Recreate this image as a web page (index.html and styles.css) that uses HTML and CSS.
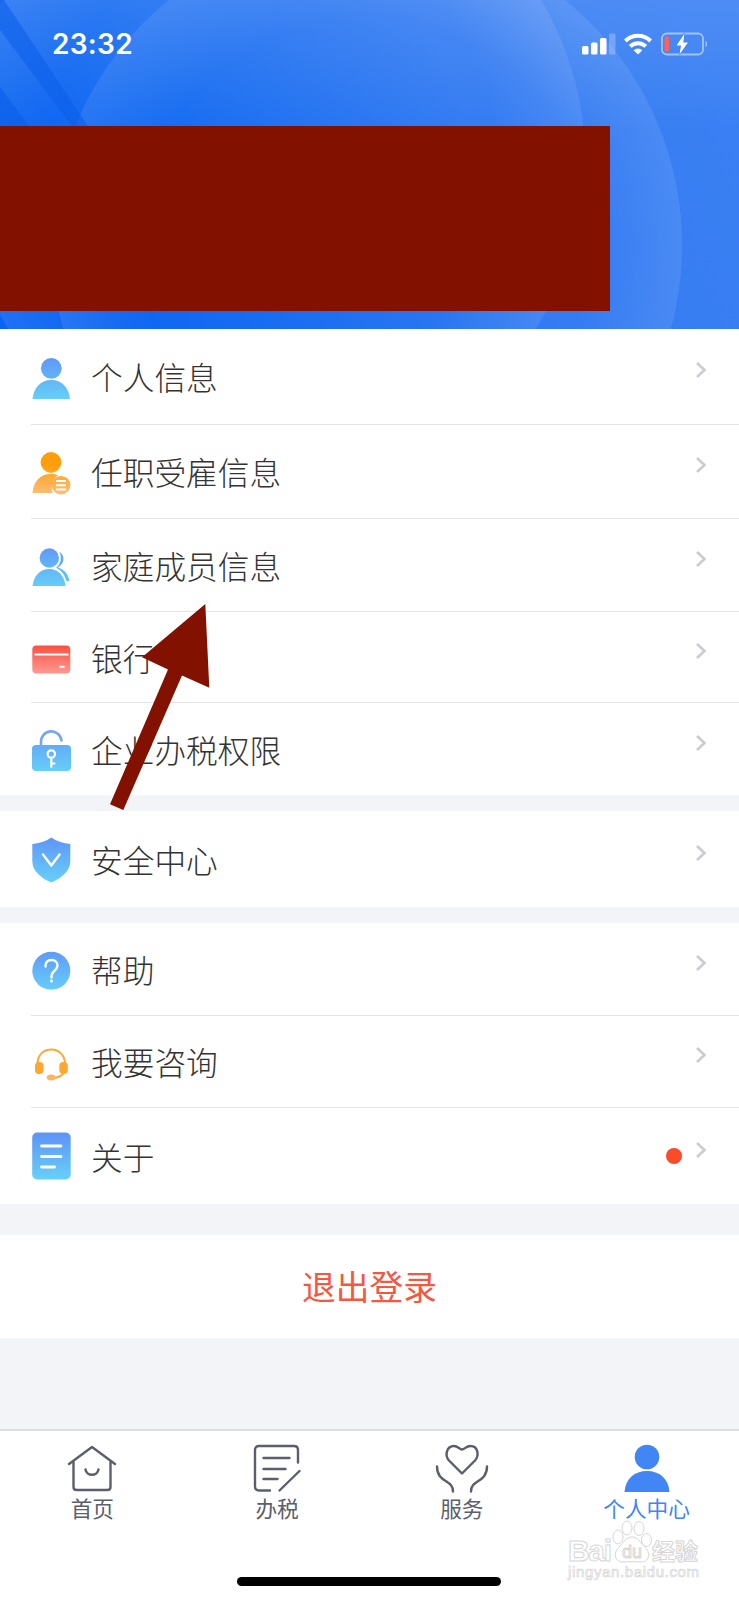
FILE: index.html
```html
<!DOCTYPE html>
<html lang="zh-CN">
<head>
    <meta charset="UTF-8">
    <meta name="viewport" content="width=device-width, initial-scale=1.0">
    <title>个人中心</title>
    <link rel="stylesheet" href="styles.css">
</head>
<body>
    <svg class="defs" width="0" height="0">
        <defs>
            <linearGradient id="blue" x1="0" y1="0" x2="0" y2="50" gradientUnits="userSpaceOnUse">
                <stop offset="0.1" stop-color="#5f97f6"/>
                <stop offset="0.95" stop-color="#66cff8"/>
            </linearGradient>
            <linearGradient id="orange" x1="0" y1="5" x2="0" y2="47" gradientUnits="userSpaceOnUse">
                <stop offset="0.3" stop-color="#ff9d0a"/>
                <stop offset="1" stop-color="#fcbd78"/>
            </linearGradient>
            <linearGradient id="red" x1="0" y1="0" x2="0" y2="1">
                <stop offset="0" stop-color="#fb5040"/>
                <stop offset="1" stop-color="#fd9a92"/>
            </linearGradient>
            <symbol id="chevron" viewBox="0 0 12 18">
                <path d="M2 2l7.5 7L2 16" fill="none" stroke="#cbccd2" stroke-width="2.6"/>
            </symbol>
        </defs>
    </svg>

    <header class="header">
        <svg class="header-bg" viewBox="0 0 739 329" width="739" height="329">
            <defs>
                <linearGradient id="sky" x1="0" y1="0.55" x2="1" y2="0.35">
                    <stop offset="0" stop-color="#0a63f2"/>
                    <stop offset="0.25" stop-color="#176cf1"/>
                    <stop offset="0.65" stop-color="#357cf2"/>
                    <stop offset="1" stop-color="#3a80f3"/>
                </linearGradient>
                <radialGradient id="ring">
                    <stop offset="0.72" stop-color="#fff" stop-opacity="0"/>
                    <stop offset="1" stop-color="#fff" stop-opacity="0.09"/>
                </radialGradient>
                <linearGradient id="top" x1="0" y1="0" x2="0" y2="1">
                    <stop offset="0" stop-color="#fff" stop-opacity="0.1"/>
                    <stop offset="0.4" stop-color="#fff" stop-opacity="0"/>
                </linearGradient>
            </defs>
            <rect width="739" height="329" fill="url(#sky)"/>
            <rect width="739" height="329" fill="url(#top)"/>
            <circle cx="367" cy="245" r="315" fill="url(#ring)"/>
            <circle cx="272" cy="160" r="313" fill="url(#ring)"/>
            <path d="M0 0h4l84 126H72L0 30z" fill="#0b5fe9" opacity="0.6"/>
            <path d="M0 87l31 42H0z" fill="#0b5fe9" opacity="0.7"/>
        </svg>
        <div class="status-bar">
            <span class="time">23:32</span>
            <svg class="status-icons" viewBox="0 0 128 24" width="128" height="24">
                <g fill="#fff">
                    <rect x="0" y="14" width="6.500" height="8.500" rx="1.500"/>
                    <rect x="9" y="10.500" width="6.500" height="12" rx="1.500"/>
                    <rect x="18" y="6" width="6.500" height="16.500" rx="1.500"/>
                    <rect x="27" y="1.500" width="6.500" height="21" rx="1.500" opacity="0.25"/>
                    <path d="M56 22.500l-4.300-4.300a6 6 0 0 1 8.600 0z"/>
                </g>
                <path d="M48.200 14.400a11 11 0 0 1 15.600 0M43.400 9a18 18 0 0 1 25.200 0" fill="none" stroke="#fff" stroke-width="4"/>
                <rect x="80" y="1.500" width="41" height="21" rx="5" fill="none" stroke="#fff" stroke-opacity="0.5" stroke-width="1.800"/>
                <path d="M123.500 8.500q3.500 3.500 0 7z" fill="#fff" opacity="0.5"/>
                <rect x="82.500" y="4.500" width="4.500" height="15" rx="1.500" fill="#ff6058"/>
                <path d="M102.500 1.500L94.500 13.500h4.500L97.500 22.500l8.500-12h-4.700z" fill="#fff" stroke="#3d80f2" stroke-width="1.500" paint-order="stroke"/>
            </svg>
        </div>
        <div class="user-mask"></div>
    </header>

    <main>
        <ul class="menu menu-info">
            <li>
                <svg class="icon" viewBox="0 0 40 50">
                    <g fill="url(#blue)">
                        <circle cx="20.300" cy="16.300" r="10.400"/>
                        <path d="M1.500 47C2.500 35.500 10 28 20.300 28S38 35.500 39 47z"/>
                    </g>
                </svg>
                <span>个人信息</span>
                <svg class="arrow"><use href="#chevron"/></svg>
            </li>
            <li>
                <svg class="icon" viewBox="0 0 40 50">
                    <g fill="url(#orange)">
                        <circle cx="20" cy="15.500" r="10.400"/>
                        <path d="M1.500 46C2.500 34.500 9 27 20 27c3 0 5 .4 7 1.400-5.500 3-8 10.600-5.200 17.600z"/>
                        <circle cx="30" cy="38.200" r="9.300"/>
                    </g>
                    <path d="M25 34h10M25 38.200h10M25 42.400h10" stroke="#fff" stroke-width="2"/>
                </svg>
                <span>任职受雇信息</span>
                <svg class="arrow"><use href="#chevron"/></svg>
            </li>
            <li>
                <svg class="icon" viewBox="0 0 40 50">
                    <g fill="url(#blue)">
                        <circle cx="18.300" cy="18" r="9.700"/>
                        <path d="M1.600 46C2.500 36 9 29 18.300 29S33.500 36 34.500 46z"/>
                        <path d="M28.500 12c5.500 3 5.500 11.500-1.500 15.500 6.500 2 10.500 7 11.500 13.500h-3.300c-1.200-6-5-11-10.200-13.200 5-4 6-10 3.500-15.800z"/>
                    </g>
                </svg>
                <span>家庭成员信息</span>
                <svg class="arrow"><use href="#chevron"/></svg>
            </li>
            <li>
                <svg class="icon" viewBox="0 0 40 50">
                    <rect x="1.300" y="13.500" width="38" height="28" rx="4" fill="url(#red)"/>
                    <path d="M3.500 22.500h34M28.500 34.800h5" stroke="#fff" stroke-width="2"/>
                </svg>
                <span>银行卡</span>
                <svg class="arrow"><use href="#chevron"/></svg>
            </li>
            <li>
                <svg class="icon" viewBox="0 0 40 50">
                    <path d="M10 22v-3.500a10.300 10.300 0 0 1 20.500-2" fill="none" stroke="#76a5f5" stroke-width="2.600" stroke-linecap="round"/>
                    <rect x="1" y="21" width="39" height="26" rx="4" fill="url(#blue)"/>
                    <g fill="none" stroke="#fff" stroke-width="2.200">
                        <circle cx="20.300" cy="30" r="3.700"/>
                        <path d="M20.300 33.500V43.500M20.300 39.500h4"/>
                    </g>
                </svg>
                <span>企业办税权限</span>
                <svg class="arrow"><use href="#chevron"/></svg>
            </li>
        </ul>

        <ul class="menu menu-safe">
            <li>
                <svg class="icon" viewBox="0 0 40 50">
                    <path d="M20.300 3.500c6 4 12 6 19 6.500v17c0 10-8.500 17-19 21.500C9.800 44 1.300 37 1.300 27V10c7-.5 13-2.500 19-6.500z" fill="url(#blue)"/>
                    <path d="M12 20.500l8.300 11 8.300-11" fill="none" stroke="#fff" stroke-width="2.400" stroke-linecap="round" stroke-linejoin="round"/>
                </svg>
                <span>安全中心</span>
                <svg class="arrow"><use href="#chevron"/></svg>
            </li>
        </ul>

        <ul class="menu menu-help">
            <li>
                <svg class="icon" viewBox="0 0 40 50">
                    <circle cx="20.300" cy="26.700" r="19" fill="url(#blue)"/>
                    <path d="M14.500 22.500c-.3-4.200 2.300-6.500 6-6.500 3.600 0 6 2.300 6 5.500 0 5-6 5.800-6 10.500v1.500" fill="none" stroke="#fff" stroke-width="2.400" stroke-linecap="round"/>
                    <circle cx="20.500" cy="37" r="1.500" fill="#fff"/>
                </svg>
                <span>帮助</span>
                <svg class="arrow"><use href="#chevron"/></svg>
            </li>
            <li>
                <svg class="icon" viewBox="0 0 40 50">
                    <path d="M6.500 27c0-9 6-14.500 13.700-14.500S34 18 34 27M33.500 34c-1 4-4 6-10 7" fill="none" stroke="#fdaa35" stroke-width="2"/>
                    <rect x="4" y="25" width="8.500" height="12" rx="4" fill="#fda730"/>
                    <rect x="28.300" y="25" width="8.500" height="12" rx="4" fill="#fda730"/>
                    <ellipse cx="20.200" cy="40.500" rx="4.500" ry="3" fill="#fdb65c"/>
                </svg>
                <span>我要咨询</span>
                <svg class="arrow"><use href="#chevron"/></svg>
            </li>
            <li>
                <svg class="icon" viewBox="0 0 40 50">
                    <rect x="1.200" y="1.500" width="38.500" height="47" rx="5" fill="url(#blue)"/>
                    <path d="M10.500 15h19.500M10.500 25.500h19.500M10.500 36h13" stroke="#fff" stroke-width="2.800" stroke-linecap="round"/>
                </svg>
                <span>关于</span>
                <i class="dot"></i>
                <svg class="arrow"><use href="#chevron"/></svg>
            </li>
        </ul>

        <button class="logout">退出登录</button>
    </main>

    <nav class="tab-bar">
        <a class="tab">
            <svg viewBox="0 0 54 50">
                <path d="M4 20L27 3l23 17M8.500 17.500V43q0 3 3 3h31q3 0 3-3V17.500M20.500 25.500c1 7 12 7 13 0"/>
            </svg>
            <span>首页</span>
        </a>
        <a class="tab">
            <svg viewBox="0 0 54 50">
                <path d="M20 46.500H9q-4 0-4-4V6q0-4 4-4h35q4 0 4 4v12.500M13.500 14h26M13.500 25h22M13.500 35h14M29.500 46.500l20-19.500"/>
            </svg>
            <span>办税</span>
        </a>
        <a class="tab">
            <svg viewBox="0 0 54 50">
                <path d="M27 29.500L14 16.500C9.500 11.500 11.500 2 19 2c4 0 5.500 3.500 8 3.500S31 2 35.500 2c7.500 0 9 9.500 4.500 14.500zM2 22.500C2 39 18.500 35.500 18 47.500M52 22.500C52 39 35.500 35.500 36 47.500"/>
            </svg>
            <span>服务</span>
        </a>
        <a class="tab active">
            <svg viewBox="0 0 54 50">
                <circle cx="27" cy="13" r="12.300"/>
                <path d="M4.500 48C5.500 34.500 14.500 27 27 27s21.500 7.500 22.500 21z"/>
            </svg>
            <span>个人中心</span>
        </a>
    </nav>

    <div class="home-indicator"></div>

    <!-- arrow pointing at the family row -->
    <svg class="pointer" viewBox="110 604 100 207" width="100" height="207">
        <path d="M205.300 604L142 657.300l26 12.200-58 134.800 13.300 5.700L182 675.500l27.300 12.300z" fill="#831100"/>
    </svg>

    <svg class="watermark" viewBox="0 0 140 64" width="140" height="64">
        <g class="wm-text">
            <text x="3" y="41" font-size="30" font-weight="700" textLength="44">Bai</text>
            <ellipse cx="53" cy="17" rx="5" ry="7"/>
            <ellipse cx="62" cy="8" rx="5" ry="7"/>
            <ellipse cx="74" cy="8.500" rx="5" ry="7"/>
            <ellipse cx="81.500" cy="20" rx="5" ry="6.500"/>
            <path d="M67 17c6 0 8 5 12 9 8 7 5 17-4 16-5-.5-11-.5-16 0-9 1-12-9-4-16 4-4 6-9 12-9z"/>
            <text x="57" y="38" font-size="18" textLength="20">du</text>
            <text x="87" y="40" font-size="23" font-weight="700" textLength="46">经验</text>
            <text x="3" y="57" font-size="15" textLength="131" class="wm-url">jingyan.baidu.com</text>
        </g>
    </svg>
</body>
</html>
```
FILE: styles.css
```css
* {
    box-sizing: border-box;
}
body {
    position: relative;
    width: 739px;
    height: 1600px;
    margin: 0;
    display: flex;
    flex-direction: column;
    overflow: hidden;
    background-color: #f2f4f8;
    color: #333;
    font-family: "Noto Sans CJK SC", sans-serif;
}
.defs {
    position: absolute;
}

/* header */
.header {
    position: relative;
    height: 329px;
    flex-shrink: 0;
}
.header-bg {
    position: absolute;
    top: 0;
    left: 0;
}
.status-bar {
    position: relative;
    display: flex;
    justify-content: space-between;
    align-items: center;
    height: 126px;
    padding: 0 29px 38px 52px;
}
.time {
    color: #fff;
    font-family: Inter, sans-serif;
    font-size: 28px;
    font-weight: 600;
    letter-spacing: 0.3px;
}
.user-mask {
    position: relative;
    width: 610px;
    height: 185px;
    background-color: #831100;
}

/* menu */
main {
    flex: 1;
}
.menu {
    list-style: none;
    margin: 0 0 16px;
    padding: 0;
    background-color: #fff;
}
.menu li {
    display: flex;
    align-items: center;
    height: 93px;
    margin-left: 31px;
    padding-right: 32px;
    border-bottom: 1px solid #e4e4e6;
    font-size: 31.7px;
    line-height: 40px;
}
.menu li:last-child {
    border-bottom: none;
}
.menu span {
    flex: 1;
    padding-bottom: 1px;
    font-weight: 300;
}
.menu-info li:nth-child(1) {
    height: 96px;
}
.menu-info li:nth-child(2) {
    height: 94px;
}
.menu-info li:nth-child(4) {
    height: 91px;
}
.menu-info li:nth-child(5) {
    height: 92px;
}
.menu-safe li {
    height: 96px;
}
.menu-help li:nth-child(2) {
    height: 92px;
}
.menu-help li:nth-child(3) {
    height: 96px;
}
.menu-help {
    margin-bottom: 31px;
}
.icon {
    width: 40px;
    height: 50px;
    margin-right: 20px;
}
.arrow {
    width: 12px;
    height: 18px;
    margin-bottom: 13px;
}
.dot {
    width: 16px;
    height: 16px;
    margin-right: 13px;
    border-radius: 50%;
    background-color: #fa4b2a;
}
.logout {
    display: block;
    width: 100%;
    height: 103px;
    padding: 0 0 2px;
    border: none;
    background-color: #fff;
    color: #f5573f;
    font-family: inherit;
    font-size: 33.7px;
}

/* bottom tabs */
.tab-bar {
    display: flex;
    height: 148px;
    border-top: 2px solid #dcdee1;
    background-color: #fff;
}
.tab {
    flex: 1;
    display: flex;
    flex-direction: column;
    align-items: center;
    padding-top: 13px;
    color: #5b5e6c;
    font-size: 21.700px;
    line-height: 28px;
}
.tab svg {
    width: 54px;
    height: 50px;
    fill: none;
    stroke: #5b5e6c;
    stroke-width: 2.4;
    stroke-linecap: round;
    stroke-linejoin: round;
}
.tab.active {
    color: #4285f4;
}
.tab.active svg {
    fill: #4285f4;
    stroke: none;
}
.home-indicator {
    height: 23px;
    background-color: #fff;
}
.home-indicator::before {
    content: "";
    display: block;
    width: 264px;
    height: 9px;
    margin-left: 237px;
    border-radius: 5px;
    background-color: #000;
}

/* overlays */
.pointer {
    position: absolute;
    top: 604px;
    left: 110px;
}
.watermark {
    position: absolute;
    top: 1520px;
    left: 565px;
}
.wm-text {
    fill: #fff;
    stroke: #d6d6d6;
    stroke-width: 1;
    font-family: "Liberation Sans", "Noto Sans CJK SC", sans-serif;
}
.wm-url {
    stroke-width: 0.7;
}
```
